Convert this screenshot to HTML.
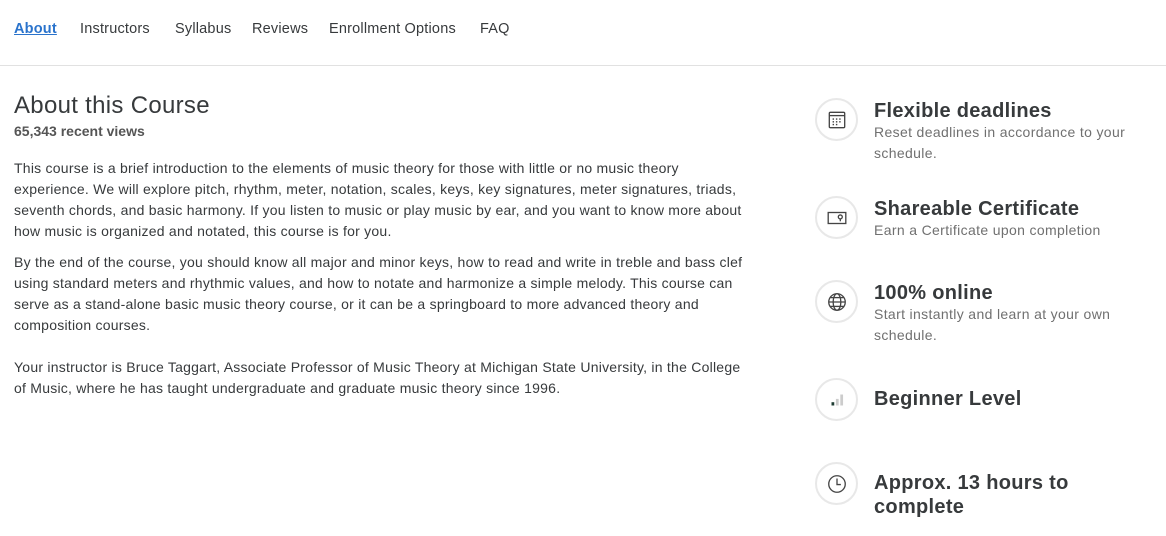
<!DOCTYPE html>
<html><head><meta charset="utf-8"><style>
*{margin:0;padding:0;box-sizing:border-box}
body{width:1166px;height:536px;background:#fff;font-family:"Liberation Sans",sans-serif;color:#373a3c;position:relative;overflow:hidden}
.nav{position:absolute;top:0;left:0;width:1166px;height:66px;border-bottom:1px solid #e1e1e1}
.nav span{position:absolute;top:21px;font-size:14.5px;color:#373a3c;letter-spacing:0.2px}
.nav .a{color:#2a73cc;font-weight:bold;text-decoration:underline}
h1{position:absolute;left:14px;top:92px;font-size:24px;font-weight:normal;color:#373a3c;letter-spacing:0.3px}
.views{position:absolute;left:14px;top:123px;font-size:14px;font-weight:bold;color:#555}
.p{position:absolute;left:14px;font-size:14px;line-height:21px;color:#373a3c;letter-spacing:0.24px;white-space:nowrap}
.c{position:absolute;left:815px;width:43px;height:43px;border:2px solid #e8e8e8;border-radius:50%;display:flex;align-items:center;justify-content:center}
.t{position:absolute;left:874px;font-size:20px;font-weight:bold;color:#373a3c;line-height:24px;letter-spacing:0.3px}
.s{position:absolute;left:874px;font-size:14px;color:#707070;line-height:21px;letter-spacing:0.35px}
</style></head><body>
<div class="nav">
<span class="a" style="left:14px">About</span>
<span style="left:80px">Instructors</span>
<span style="left:175px">Syllabus</span>
<span style="left:252px">Reviews</span>
<span style="left:329px">Enrollment Options</span>
<span style="left:480px">FAQ</span>
</div>
<h1>About this Course</h1>
<div class="views">65,343 recent views</div>
<div class="p" style="top:158px">This course is a brief introduction to the elements of music theory for those with little or no music theory<br>experience. We will explore pitch, rhythm, meter, notation, scales, keys, key signatures, meter signatures, triads,<br>seventh chords, and basic harmony. If you listen to music or play music by ear, and you want to know more about<br>how music is organized and notated, this course is for you.</div>
<div class="p" style="top:252px">By the end of the course, you should know all major and minor keys, how to read and write in treble and bass clef<br>using standard meters and rhythmic values, and how to notate and harmonize a simple melody. This course can<br>serve as a stand-alone basic music theory course, or it can be a springboard to more advanced theory and<br>composition courses.</div>
<div class="p" style="top:357px">Your instructor is Bruce Taggart, Associate Professor of Music Theory at Michigan State University, in the College<br>of Music, where he has taught undergraduate and graduate music theory since 1996.</div>

<div class="c" style="top:98px"><svg width="22" height="22" viewBox="0 0 20 20" fill="none" stroke="#444" stroke-width="1.2"><rect x="3" y="3" width="14" height="14" rx="1"/><line x1="3" y1="6" x2="17" y2="6"/><g fill="#444" stroke="none"><rect x="6" y="8.5" width="1.3" height="1.3"/><rect x="9" y="8.5" width="1.3" height="1.3"/><rect x="12" y="8.5" width="1.3" height="1.3"/><rect x="6" y="11" width="1.3" height="1.3"/><rect x="9" y="11" width="1.3" height="1.3"/><rect x="12" y="11" width="1.3" height="1.3"/><rect x="6" y="13.5" width="1.3" height="1.3"/><rect x="9" y="13.5" width="1.3" height="1.3"/></g></svg></div>
<div class="t" style="top:99px">Flexible deadlines</div>
<div class="s" style="top:122px">Reset deadlines in accordance to your<br>schedule.</div>

<div class="c" style="top:196px"><svg width="22" height="22" viewBox="0 0 20 20" fill="none" stroke="#444" stroke-width="1.2"><rect x="2" y="5" width="16" height="10"/><circle cx="13" cy="9" r="1.8"/><line x1="13" y1="11" x2="13" y2="13"/></svg></div>
<div class="t" style="top:197px">Shareable Certificate</div>
<div class="s" style="top:220px">Earn a Certificate upon completion</div>

<div class="c" style="top:280px"><svg width="22" height="22" viewBox="0 0 20 20" fill="none" stroke="#444" stroke-width="1.2"><circle cx="10" cy="10" r="7.5"/><ellipse cx="10" cy="10" rx="3.5" ry="7.5"/><line x1="2.5" y1="10" x2="17.5" y2="10"/><line x1="4" y1="6" x2="16" y2="6"/><line x1="4" y1="14" x2="16" y2="14"/></svg></div>
<div class="t" style="top:281px">100% online</div>
<div class="s" style="top:304px">Start instantly and learn at your own<br>schedule.</div>

<div class="c" style="top:378px"><svg width="22" height="22" viewBox="0 0 20 20"><rect x="5" y="12" width="2.5" height="3" fill="#1f3d33"/><rect x="9" y="9" width="2.5" height="6" fill="#ccc"/><rect x="13" y="5" width="2.5" height="10" fill="#ccc"/></svg></div>
<div class="t" style="top:387px">Beginner Level</div>

<div class="c" style="top:462px"><svg width="22" height="22" viewBox="0 0 20 20" fill="none" stroke="#444" stroke-width="1.2"><circle cx="10" cy="10" r="7.5"/><polyline points="10,5 10,10.5 13.5,10.5"/></svg></div>
<div class="t" style="top:471px">Approx. 13 hours to<br>complete</div>
</body></html>
